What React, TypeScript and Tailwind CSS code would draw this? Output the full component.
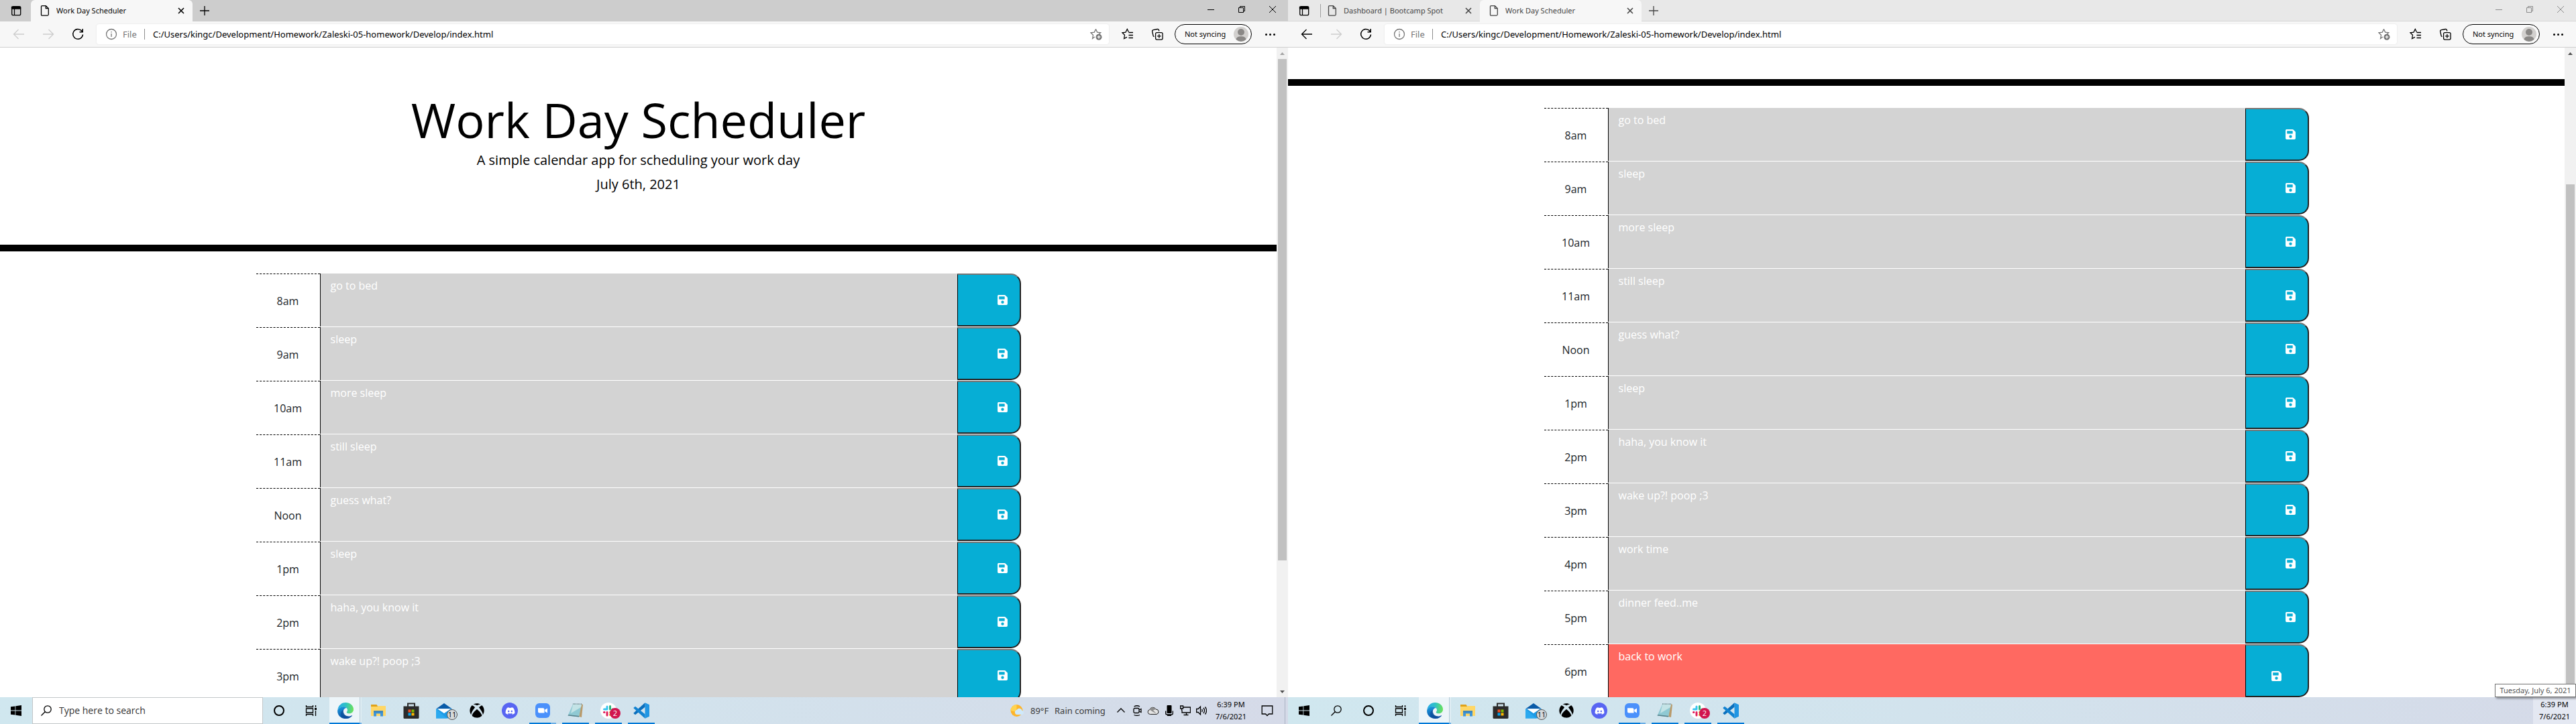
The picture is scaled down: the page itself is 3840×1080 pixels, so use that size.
import type { ReactNode } from "react";
import { FaDiscord, FaSave, FaXbox } from "react-icons/fa";

/* ---------- line icons ---------- */

function Line({ size = 20, box = 20, children }: { size?: number; box?: number; children: ReactNode }) {
  return (
    <svg width={size} height={size} viewBox={`0 0 ${box} ${box}`} fill="none" stroke="currentColor" strokeWidth="1.3" aria-hidden="true" className="block shrink-0">
      {children}
    </svg>
  );
}

const SidebarIcon = () => (
  <Line size={16} box={16}>
    <rect x="1.7" y="1.7" width="13" height="13" rx="2" />
    <path d="M1.5 2.5h13v2.5h-13z" fill="currentColor" />
    <path d="M5.5 5v9.5" />
  </Line>
);
const PageIcon = () => (
  <Line size={18} box={18}>
    <path d="M4.7 1.6h5.6l4 4v9a1.5 1.5 0 0 1-1.5 1.5H4.7a1.2 1.2 0 0 1-1.2-1.2V2.8a1.2 1.2 0 0 1 1.2-1.2zM10.3 1.6v4h4" />
  </Line>
);
const CrossIcon = () => (
  <Line size={10} box={10}>
    <path d="M1 1l8 8M9 1l-8 8" strokeWidth="1.6" />
  </Line>
);
const PlusIcon = () => (
  <Line size={16} box={16}>
    <path d="M8 1v14M1 8h14" />
  </Line>
);
const BackIcon = () => (
  <Line size={18} box={18}>
    <path d="M17 9H1.5M8.5 2L1.5 9l7 7" />
  </Line>
);
const ForwardIcon = () => (
  <Line size={18} box={18}>
    <path d="M1 9h15.500M9.500 2l7 7-7 7" />
  </Line>
);
const ReloadIcon = () => (
  <Line size={18} box={18}>
    <path d="M16.500 9.500a7.400 7.400 0 1 1-2-5.700L16 5.400M16.200 1v4.700h-4.700" strokeWidth="1.5" />
  </Line>
);
const InfoIcon = () => (
  <Line size={18} box={18}>
    <circle cx="9" cy="9" r="7.500" />
    <path d="M9 8v5M9 5v1.500" />
  </Line>
);
const StarAddIcon = () => (
  <Line size={18} box={18}>
    <path d="M8.500 1.500l2.200 4.600 5 .7-3.300 3M6.800 13l-3.200 2.500.9-5.200L1 6.800l5.300-.7L8.500 1.500" />
    <circle cx="13" cy="13.200" r="4.500" fill="currentColor" stroke="none" />
    <path d="M13 10.700v5M10.500 13.200h5" stroke="#fff" />
  </Line>
);
const FavoritesIcon = () => (
  <Line size={18} box={18}>
    <path d="M10.500 5.800L8.300 1.500 6 6.100l-5 .7 3.500 3.500-.9 5.200L8 13.400" />
    <path d="M10.500 6.500H17M10.500 10.500H17M10.500 14.500H17" />
  </Line>
);
const CollectionsIcon = () => (
  <Line size={18} box={18}>
    <rect x="6.600" y="6.600" width="10.500" height="10.500" rx="2" />
    <path d="M11.900 9v5.800M9 11.900h5.800M4.600 12.600L3.200 11.800 1.700 5a2 2 0 0 1 1.500-2.300l6-1.200a2 2 0 0 1 2.300 1.500l.3 1.500" />
  </Line>
);
const RestoreIcon = () => (
  <Line size={12} box={12}>
    <path d="M1.500 3.500h7v7h-7zM3.500 3.500v-2h7v7h-2" strokeWidth="1" />
  </Line>
);

const Avatar = () => (
  <svg width="24" height="24" viewBox="0 0 24 24" aria-hidden="true" className="block shrink-0">
    <circle cx="12" cy="12" r="11" fill="#d2d0ce" />
    <circle cx="12" cy="9" r="5" fill="#8a8886" />
    <path d="M4.500 19.800C5 16.500 8 15.200 12 15.200s7 1.300 7.500 4.600A11 11 0 0 1 12 23a11 11 0 0 1-7.500-3.200z" fill="#8a8886" />
  </svg>
);

/* ---------- browser window ---------- */

type Tab = { title: string; active: boolean };

function TabItem({ title, active }: Tab) {
  return (
    <div className={active ? "flex h-8 w-[241px] items-center rounded-t-md bg-[#f7f7f7] pr-3 pl-3" : "flex h-8 w-[237px] items-center pr-3 pl-2"}>
      <PageIcon />
      <span className="ml-2 flex-1 truncate text-[11px] leading-4">{title}</span>
      <button type="button" aria-label={`Close ${title}`}>
        <CrossIcon />
      </button>
    </div>
  );
}

function BrowserWindow({ id, tabs, focused, canGoBack, thumb, children }: {
  id: string;
  tabs: Tab[];
  focused: boolean;
  canGoBack: boolean;
  thumb: ReactNode;
  children: ReactNode;
}) {
  return (
    <section className="flex min-h-0 flex-1 flex-col bg-white">
      <div className={focused ? "flex h-8 shrink-0 bg-[#cdcdcd] font-['Noto_Sans',sans-serif] text-black" : "flex h-8 shrink-0 bg-[#e8e8e8] font-['Noto_Sans',sans-serif] text-[#444] shadow-[inset_0_-1px_0_#d6d6d6]"}>
        <button type="button" aria-label="Tab actions" className={focused ? "mr-[6px] flex w-10 items-center justify-end pr-2 text-black" : "flex w-12 items-center justify-center pr-0 text-black"}>
          <SidebarIcon />
        </button>
        {!focused && <div className="mt-[6px] h-5 w-px bg-[#a0a0a0]" />}
        {tabs.map((tab) => (
          <TabItem key={tab.title} {...tab} />
        ))}
        <button type="button" aria-label="New tab" className="flex w-9 items-center justify-center">
          <PlusIcon />
        </button>
        <div className={focused ? "ml-auto flex h-7 text-black" : "ml-auto flex h-7 text-[#8c8c8c]"}>
          <button type="button" aria-label="Minimize" className="flex w-[46px] items-center justify-center">
            <span className="h-px w-[10px] bg-current" />
          </button>
          <button type="button" aria-label="Restore" className="flex w-[46px] items-center justify-center">
            <RestoreIcon />
          </button>
          <button type="button" aria-label="Close" className="flex w-[46px] items-center justify-center">
            <Line size={12} box={12}>
              <path d="M1 1l10 10M11 1L1 11" strokeWidth="1" />
            </Line>
          </button>
        </div>
      </div>

      <div className="flex h-[39px] shrink-0 items-center border-b border-[#cfcfcf] bg-[#f7f7f7] font-['Noto_Sans',sans-serif] text-black">
        <button type="button" aria-label="Back" className={canGoBack ? "flex w-11 justify-center pl-3" : "flex w-11 justify-center pl-3 text-[#cdcdcd]"}>
          <BackIcon />
        </button>
        <button type="button" aria-label="Forward" className="flex w-11 justify-center pl-3 text-[#cdcdcd]">
          <ForwardIcon />
        </button>
        <button type="button" aria-label="Refresh" className="flex w-11 justify-center pl-3">
          <ReloadIcon />
        </button>
        <div className="ml-3 flex h-[30px] flex-1 items-center rounded-[4px] bg-white pr-[10px] pl-[13px] text-[13px] leading-5 shadow-[0_0_3px_rgba(0,0,0,0.08)]">
          <span className="text-[#767676]">
            <InfoIcon />
          </span>
          <label htmlFor={`${id}-address`} className="ml-2 w-8 text-[#767676]">
            File
          </label>
          <div className="mr-3 h-4 w-px bg-[#8c8c8c]" />
          <input
            id={`${id}-address`}
            className="min-w-0 flex-1 bg-transparent outline-none"
            defaultValue="C:/Users/kingc/Development/Homework/Zaleski-05-homework/Develop/index.html"
          />
          <button type="button" aria-label="Add to favorites" className="text-[#767676]">
            <StarAddIcon />
          </button>
        </div>
        <button type="button" aria-label="Favorites" className="ml-1 flex w-12 justify-center">
          <FavoritesIcon />
        </button>
        <button type="button" aria-label="Collections" className="flex w-10 justify-center">
          <CollectionsIcon />
        </button>
        <button type="button" className="ml-[6px] flex h-[30px] w-[115px] items-center justify-between rounded-full border border-black bg-[#f9f9f9] pr-[3px] pl-[14px] text-[11px] leading-4">
          Not syncing
          <Avatar />
        </button>
        <button type="button" aria-label="Settings and more" className="flex w-[54px] items-center justify-center gap-[3px]">
          <span className="size-[3px] rounded-full bg-black" />
          <span className="size-[3px] rounded-full bg-black" />
          <span className="size-[3px] rounded-full bg-black" />
        </button>
      </div>

      <div className="flex min-h-0 flex-1">
        <main className="min-w-0 flex-1 overflow-hidden">{children}</main>
        <div aria-hidden="true" className="flex w-[17px] shrink-0 flex-col items-center bg-[#f1f1f1]">
          {thumb}
        </div>
      </div>
    </section>
  );
}

const ScrollArrow = ({ down = false, dim = false }: { down?: boolean; dim?: boolean }) => (
  <svg width="17" height="17" viewBox="0 0 17 17" className="block shrink-0">
    <path d={down ? "M5 7h7l-3.500 4z" : "M5 11h7L8.500 7z"} fill={dim ? "#a3a3a3" : "#505050"} />
  </svg>
);

/* ---------- planner page ---------- */

type Entry = { hour: string; text: string; current?: boolean };

const entries: Entry[] = [
  { hour: "8am", text: "go to bed" },
  { hour: "9am", text: "sleep" },
  { hour: "10am", text: "more sleep" },
  { hour: "11am", text: "still sleep" },
  { hour: "Noon", text: "guess what?" },
  { hour: "1pm", text: "sleep" },
  { hour: "2pm", text: "haha, you know it" },
  { hour: "3pm", text: "wake up?! poop ;3" },
  { hour: "4pm", text: "work time" },
  { hour: "5pm", text: "dinner feed..me" },
  { hour: "6pm", text: "back to work", current: true },
];

function Schedule({ id, rows }: { id: string; rows: Entry[] }) {
  return (
    <div className="mx-auto mt-[33px] max-w-[1140px] text-base leading-6">
      {rows.map(({ hour, text, current }) => (
        <div key={hour} className="grid h-20 grid-cols-[95px_1fr_95px] border-b border-white">
          <label htmlFor={`${id}-${hour}`} className="flex items-center justify-center border-t border-dashed border-black pt-[2px] text-[#212529]">
            {hour}
          </label>
          <textarea
            id={`${id}-${hour}`}
            defaultValue={text}
            className={
              current
                ? "block size-full resize-none overflow-hidden border-l border-black bg-[#ff6961] pt-[6px] pl-[15px] text-white outline-none"
                : "block size-full resize-none overflow-hidden border-l border-black bg-[#d3d3d3] pt-[6px] pl-[15px] text-white outline-none"
            }
          />
          <button
            type="button"
            aria-label={`Save ${hour}`}
            className={
              current
                ? "flex items-center justify-center rounded-r-[15px] border-2 border-l border-t-[#767676] border-r-[#212121] border-b-[#212121] border-l-black bg-[#06aed5] pt-4 text-white"
                : "flex items-center justify-end rounded-r-[15px] border-2 border-l border-t-[#767676] border-r-[#212121] border-b-[#212121] border-l-black bg-[#06aed5] pr-[17px] text-white"
            }
          >
            <FaSave size={17} />
          </button>
        </div>
      ))}
    </div>
  );
}

/* ---------- taskbar ---------- */

const StartIcon = () => (
  <svg width="16" height="16" viewBox="0 0 16 16" aria-hidden="true">
    <path d="M0 2.300l6.500-.9v6.200H0zM7.300 1.300L16 0v7.600H7.300zM0 8.400h6.500v6.200L0 13.700zM7.300 8.400H16V16l-8.700-1.300z" />
  </svg>
);
const SearchIcon = () => (
  <Line size={18} box={18}>
    <circle cx="11" cy="7" r="5.200" />
    <path d="M7.200 10.800L1.500 16.500" />
  </Line>
);
const CortanaIcon = () => (
  <Line size={18} box={18}>
    <circle cx="9" cy="9" r="7" strokeWidth="2" />
  </Line>
);
const TaskViewIcon = () => (
  <Line size={18} box={18}>
    <path d="M1.500 1v2.500h10V1M1.500 6h10v6h-10zM1.500 17v-2.500h10V17M15.500 1v3M15.500 9v8" />
    <path d="M14 5h3v3h-3z" fill="currentColor" stroke="none" />
  </Line>
);

const EdgeLogo = ({ id }: { id: string }) => (
  <svg width="24" height="24" viewBox="0 0 24 24" aria-hidden="true">
    <defs>
      <linearGradient id={`${id}-a`} x1="0" y1="0.300" x2="1" y2="0.400">
        <stop offset="0" stopColor="#2aa9e8" />
        <stop offset="0.500" stopColor="#2fc3c4" />
        <stop offset="1" stopColor="#6be25a" />
      </linearGradient>
      <linearGradient id={`${id}-b`} x1="0" y1="0" x2="0.400" y2="1">
        <stop offset="0" stopColor="#1b9de2" />
        <stop offset="1" stopColor="#0b4fa3" />
      </linearGradient>
    </defs>
    <path d="M.3 11C1 4.500 6 0 12.200 0 19 0 24 4.600 24 10c0 4-2.900 6.300-6.300 6.300-2.600 0-4-.9-4-1.800 0-.8 1.300-1.200 1.300-3.500C15 8.500 12.500 6.400 9 6.400 5 6.400 1.500 8.600.3 11z" fill={`url(#${id}-a)`} />
    <path d="M.2 11.500C1.200 8.300 4.800 6.300 8.900 6.300c2 0 3.700.6 4.700 1.600-3 .3-5 2.800-5 5.900 0 4 3.400 6.700 7.800 6.700 2 0 3.700-.5 5.100-1.300.4-.2.700.1.500.5A12 12 0 0 1 12 24C5 24-.6 18.500.2 11.500z" fill={`url(#${id}-b)`} />
    <path d="M9.300 10.500c-1.400 4.500 1.600 9.800 7.300 10.200-2 2.500-5.500 3.200-8.600 1.900-4-2.400-4.500-9.200 1.300-12.100z" fill="#0c4a93" opacity="0.600" />
  </svg>
);
const FolderLogo = () => (
  <svg width="22" height="20" viewBox="0 0 22 20" aria-hidden="true">
    <path d="M0 1h8.500L10 3.500V7H0z" fill="#e0a21a" />
    <path d="M0 4h9.500l1.500-1h11v15H0z" fill="#ffd766" />
    <path d="M4 18.500v-8h14v8h-4v-4H8v4z" fill="#3f94d6" />
    <path d="M4 10.500h14v2H4z" fill="#2f7cbd" />
  </svg>
);
const StoreLogo = () => (
  <svg width="24" height="24" viewBox="0 0 24 24" aria-hidden="true">
    <path d="M7 6V1.500h10V6" fill="none" stroke="#2b2b2b" strokeWidth="2" />
    <path d="M.5 5.500h23v17a1.500 1.500 0 0 1-1.500 1.500H2a1.500 1.500 0 0 1-1.500-1.500z" fill="#2b2b2b" />
    <path d="M7.500 10.500h4v4h-4z" fill="#f25022" />
    <path d="M12.500 10.500h4v4h-4z" fill="#7fba00" />
    <path d="M7.500 15.500h4v4h-4z" fill="#00a4ef" />
    <path d="M12.500 15.500h4v4h-4z" fill="#ffb900" />
  </svg>
);
const MailLogo = () => (
  <svg width="24" height="24" viewBox="0 0 24 24" aria-hidden="true">
    <path d="M0 9.500L12 1l12 8.500z" fill="#0a5ba8" />
    <path d="M0 9.500h24V23.500H0z" fill="#1e9be6" />
    <path d="M2.500 9.500h19L12 16z" fill="#f5f9fc" />
    <path d="M0 9.500L16 23.500H0z" fill="#2ba9ef" />
    <path d="M2.500 9.500h19L12 15.500z" fill="#fff" />
  </svg>
);
const ZoomLogo = () => (
  <svg width="22" height="22" viewBox="0 0 22 22" aria-hidden="true">
    <rect width="22" height="22" rx="6" fill="#4a90fb" />
    <path d="M4 7.300h7.500a2 2 0 0 1 2 2v5.200H6a2 2 0 0 1-2-2zM14.300 9.800L18 7.500v7l-3.700-2.300z" fill="#fff" />
  </svg>
);
const NotepadLogo = () => (
  <svg width="24" height="24" viewBox="0 0 24 24" aria-hidden="true">
    <path d="M20 2l3 1-2 19-4-1z" fill="#b99a6b" />
    <path d="M8.500 1.500L21 2.500 17 21.500.5 19.500z" fill="#8fc9d3" />
    <path d="M8.500 1.500L21 2.500l-1 4.500L5 16z" fill="#c3e3e6" />
    <path d="M.5 19.500L17 21.500l.3-1.500L1.300 18z" fill="#56808a" />
    <path d="M8 2.200h13" stroke="#5a6a70" strokeWidth="1.200" strokeDasharray="1 1" />
  </svg>
);
const SlackLogo = () => (
  <svg width="24" height="24" viewBox="0 0 24 24" aria-hidden="true">
    <circle cx="12" cy="12" r="12" fill="#fff" />
    <g strokeWidth="3" strokeLinecap="round">
      <path d="M10 6v4M5.500 10H10" stroke="#36c5f0" />
      <path d="M14.500 5.500V10M18.500 10h-.5" stroke="#2eb67d" />
      <path d="M14.500 14.500H19M14.500 18.500v-.5" stroke="#ecb22e" />
      <path d="M10 14.500V19M5.500 14.500H6" stroke="#e01e5a" />
    </g>
  </svg>
);
const CodeLogo = () => (
  <svg width="24" height="24" viewBox="0 0 24 24" aria-hidden="true">
    <path d="M17.500.3L24 3.200v17.600l-6.500 2.900z" fill="#2196e3" />
    <path d="M17.500.3v6.500L3 18.300l-2.200-1.800a.8.8 0 0 1 0-1.200z" fill="#0a6fbd" />
    <path d="M17.500 23.700v-6.500L3 5.700.8 7.500a.8.8 0 0 0 0 1.200z" fill="#1383d1" />
  </svg>
);

const Badge = ({ children, red = false }: { children: ReactNode; red?: boolean }) => (
  <span
    className={
      red
        ? "absolute top-4 left-[26px] flex size-4 items-center justify-center rounded-full bg-[#d1144f] text-[11px] leading-4 text-white"
        : "absolute top-[18px] left-7 flex size-4 items-center justify-center rounded-full border border-[#555] bg-[#d5d9dc] text-[11px] leading-4 text-black"
    }
  >
    {children}
  </span>
);

function AppButton({ name, state = "idle", children }: { name: string; state?: "idle" | "open" | "stacked" | "active"; children: ReactNode }) {
  return (
    <button type="button" aria-label={name} className={state === "active" ? "relative flex h-10 w-12 items-center justify-center bg-[#edf5f9]" : "relative flex h-10 w-12 items-center justify-center"}>
      {children}
      {state === "open" && <span className="absolute inset-x-1 bottom-0 h-[2px] bg-[#0078d7]" />}
      {state === "stacked" && <span className="absolute inset-x-1 bottom-0 h-[2px] border-r-8 border-[#6aaee6] bg-[#0078d7]" />}
      {state === "active" && (
        <>
          <span className="absolute inset-y-0 right-0 w-[3px] border-l border-[#b5cbd6] bg-[#dfedf4]" />
          <span className="absolute inset-x-0 bottom-0 h-[2px] border-r-[3px] border-[#6aaee6] bg-[#0078d7]" />
        </>
      )}
    </button>
  );
}

function PinnedApps({ id }: { id: string }) {
  return (
    <div className="ml-[3px] flex gap-px">
      <AppButton name="Microsoft Edge" state="active"><EdgeLogo id={id} /></AppButton>
      <AppButton name="File Explorer"><FolderLogo /></AppButton>
      <AppButton name="Microsoft Store"><StoreLogo /></AppButton>
      <AppButton name="Mail"><MailLogo /><Badge>11</Badge></AppButton>
      <AppButton name="Xbox"><FaXbox size={22} /></AppButton>
      <AppButton name="Discord">
        <span className="flex size-6 items-center justify-center rounded-full bg-[#5865f2] text-white"><FaDiscord size={15} /></span>
      </AppButton>
      <AppButton name="Zoom" state="stacked"><ZoomLogo /></AppButton>
      <AppButton name="Notepad" state="open"><NotepadLogo /></AppButton>
      <AppButton name="Slack" state="open"><SlackLogo /><Badge red>2</Badge></AppButton>
      <AppButton name="Visual Studio Code" state="open"><CodeLogo /></AppButton>
    </div>
  );
}

const slot = "flex h-10 w-12 items-center justify-center";
const traySlot = "flex h-10 w-6 items-center justify-center";

const Clock = () => (
  <time className="block text-center font-['Noto_Sans',sans-serif] text-[11px] leading-[18px]">
    6:39 PM
    <br />
    7/6/2021
  </time>
);

function SystemTray() {
  return (
    <div className="ml-auto flex items-center text-black">
      <button type="button" className="flex h-10 items-center font-['Noto_Sans',sans-serif] text-[13px] leading-5 text-[#3b3b3b]">
        <svg width="20" height="20" viewBox="0 0 20 20" aria-hidden="true">
          <circle cx="9.500" cy="10" r="9" fill="#fdb52b" />
          <path d="M9.500 1a9 9 0 0 0-9 9l9 2z" fill="#ffd34f" />
          <path d="M10 16a3.500 3.500 0 0 1-.3-6.900 4.300 4.300 0 0 1 8 1A3 3 0 0 1 17.200 16z" fill="#cfe9fb" />
        </svg>
        <span className="ml-[10px] w-9 text-left">89°F</span>
        <span className="w-[87px] text-left">Rain coming</span>
      </button>
      <button type="button" aria-label="Show hidden icons" className={traySlot}>
        <Line size={14} box={14}><path d="M1.500 9.500L7 4l5.500 5.500" /></Line>
      </button>
      <button type="button" aria-label="Meet Now" className={traySlot}>
        <Line size={16} box={16}>
          <rect x="3" y="4.500" width="8" height="7" rx="1.500" />
          <path d="M11 7l3-1.500v5L11 9M3.500 2Q8-.5 12 2M3.500 14.500q4.500 2 8.500 0" />
        </Line>
      </button>
      <button type="button" aria-label="OneDrive" className={traySlot}>
        <svg width="18" height="14" viewBox="0 0 18 14" aria-hidden="true">
          <path d="M4.500 12.500a3.500 3.500 0 0 1-.7-6.900 5 5 0 0 1 9.200-.6 3.800 3.800 0 0 1 1 7.500z" fill="#e4e4e4" stroke="#222" />
          <path d="M3.800 5.600a5 5 0 0 1 9.200-.6l-4 1.500 5 5-6-3z" fill="#8d8d8d" />
        </svg>
      </button>
      <button type="button" aria-label="Microphone" className={traySlot}>
        <Line size={16} box={16}>
          <rect x="4.500" y="0" width="7" height="12" rx="1" fill="currentColor" stroke="none" />
          <path d="M2.700 8.500v3.500q0 2 2 2h6.600q2 0 2-2V8.500M5 15.500h6" />
        </Line>
      </button>
      <button type="button" aria-label="Network" className={traySlot}>
        <Line size={16} box={16}>
          <path d="M5 3h10.500v8H3V7.500M9.500 11v3.500M5.500 14.500h7M.6 1h4v4h-4zM2.600 5v3" />
        </Line>
      </button>
      <button type="button" aria-label="Volume" className={traySlot}>
        <Line size={16} box={16}>
          <path d="M.6 5.500h2.500L6.500 2v12L3.100 10.500H.6zM8.500 6q1.500 2 0 4M11 4q3 4 0 8M13.500 2.500q4 5.500 0 11" />
        </Line>
      </button>
      <div className="w-16"><Clock /></div>
      <button type="button" aria-label="Notifications" className="mr-1 flex h-10 w-11 items-center justify-center">
        <Line size={18} box={18}>
          <path d="M1.200 2h15.600v12h-5.300L9 16.500 6.500 14H1.200z" />
        </Line>
      </button>
      <div className="h-10 w-[5px] border-l border-[#a9b2c2]" />
    </div>
  );
}

function Taskbar({ id, children, search }: { id: string; children: ReactNode; search: ReactNode }) {
  return (
    <nav className="flex h-10 shrink-0 items-center bg-linear-to-r from-[#d0e7ef] via-[#d2e3ed] to-[#d5dae8] text-black">
      <button type="button" aria-label="Start" className={slot}><StartIcon /></button>
      {search}
      <button type="button" aria-label="Cortana" className={slot}><CortanaIcon /></button>
      <button type="button" aria-label="Task View" className={slot}><TaskViewIcon /></button>
      <PinnedApps id={id} />
      {children}
    </nav>
  );
}

/* ---------- desktop ---------- */

export default function App() {
  return (
    <div className="grid h-screen grid-cols-2 overflow-hidden bg-white font-['Open_Sans','Noto_Sans',sans-serif]">
      <div className="flex min-h-0 min-w-0 flex-col">
        <BrowserWindow
          id="left"
          focused
          canGoBack={false}
          tabs={[{ title: "Work Day Scheduler", active: true }]}
          thumb={
            <>
              <ScrollArrow dim />
              <div className="w-[13px] flex-[4] bg-[#c1c1c1]" />
              <div className="flex-1" />
              <ScrollArrow down />
            </>
          }
        >
          <header className="border-b-[10px] border-black px-8 pt-[65px] pb-[68px] text-center text-xl leading-9 text-black">
            <h1 className="text-[72px] leading-[85px]">Work Day Scheduler</h1>
            <p>A simple calendar app for scheduling your work day</p>
            <p className="pb-1">July 6th, 2021</p>
          </header>
          <Schedule id="left" rows={entries.slice(0, 8)} />
        </BrowserWindow>
        <Taskbar
          id="left-edge"
          search={
            <div className="flex h-10 w-[344px] items-center border border-[#c3c7c9] bg-white pl-[11px]">
              <label htmlFor="taskbar-search" aria-label="Search"><SearchIcon /></label>
              <input id="taskbar-search" placeholder="Type here to search" className="ml-[10px] min-w-0 flex-1 text-sm leading-5 outline-none placeholder:text-[#333]" />
            </div>
          }
        >
          <SystemTray />
        </Taskbar>
      </div>

      <div className="flex min-h-0 min-w-0 flex-col">
        <BrowserWindow
          id="right"
          focused={false}
          canGoBack
          tabs={[
            { title: "Dashboard | Bootcamp Spot", active: false },
            { title: "Work Day Scheduler", active: true },
          ]}
          thumb={
            <>
              <ScrollArrow />
              <div className="flex-1" />
              <div className="w-[13px] flex-[4] bg-[#c1c1c1]" />
              <ScrollArrow down />
            </>
          }
        >
          <div className="border-b-[10px] border-black pt-[47px]" />
          <Schedule id="right" rows={entries} />
        </BrowserWindow>
        <Taskbar
          id="right-edge"
          search={<button type="button" aria-label="Search" className={slot}><SearchIcon /></button>}
        >
          <div className="relative ml-auto flex h-10 w-16 items-center justify-center bg-[#e4e8f2]">
            <div role="tooltip" className="absolute right-0 bottom-full flex h-5 w-[121px] items-center justify-center border border-[#767676] bg-white font-['Noto_Sans',sans-serif] text-[11px] leading-4 whitespace-nowrap text-[#575757] shadow-[2px_2px_3px_rgba(0,0,0,0.4)]">
              Tuesday, July 6, 2021
            </div>
            <Clock />
          </div>
        </Taskbar>
      </div>
    </div>
  );
}
